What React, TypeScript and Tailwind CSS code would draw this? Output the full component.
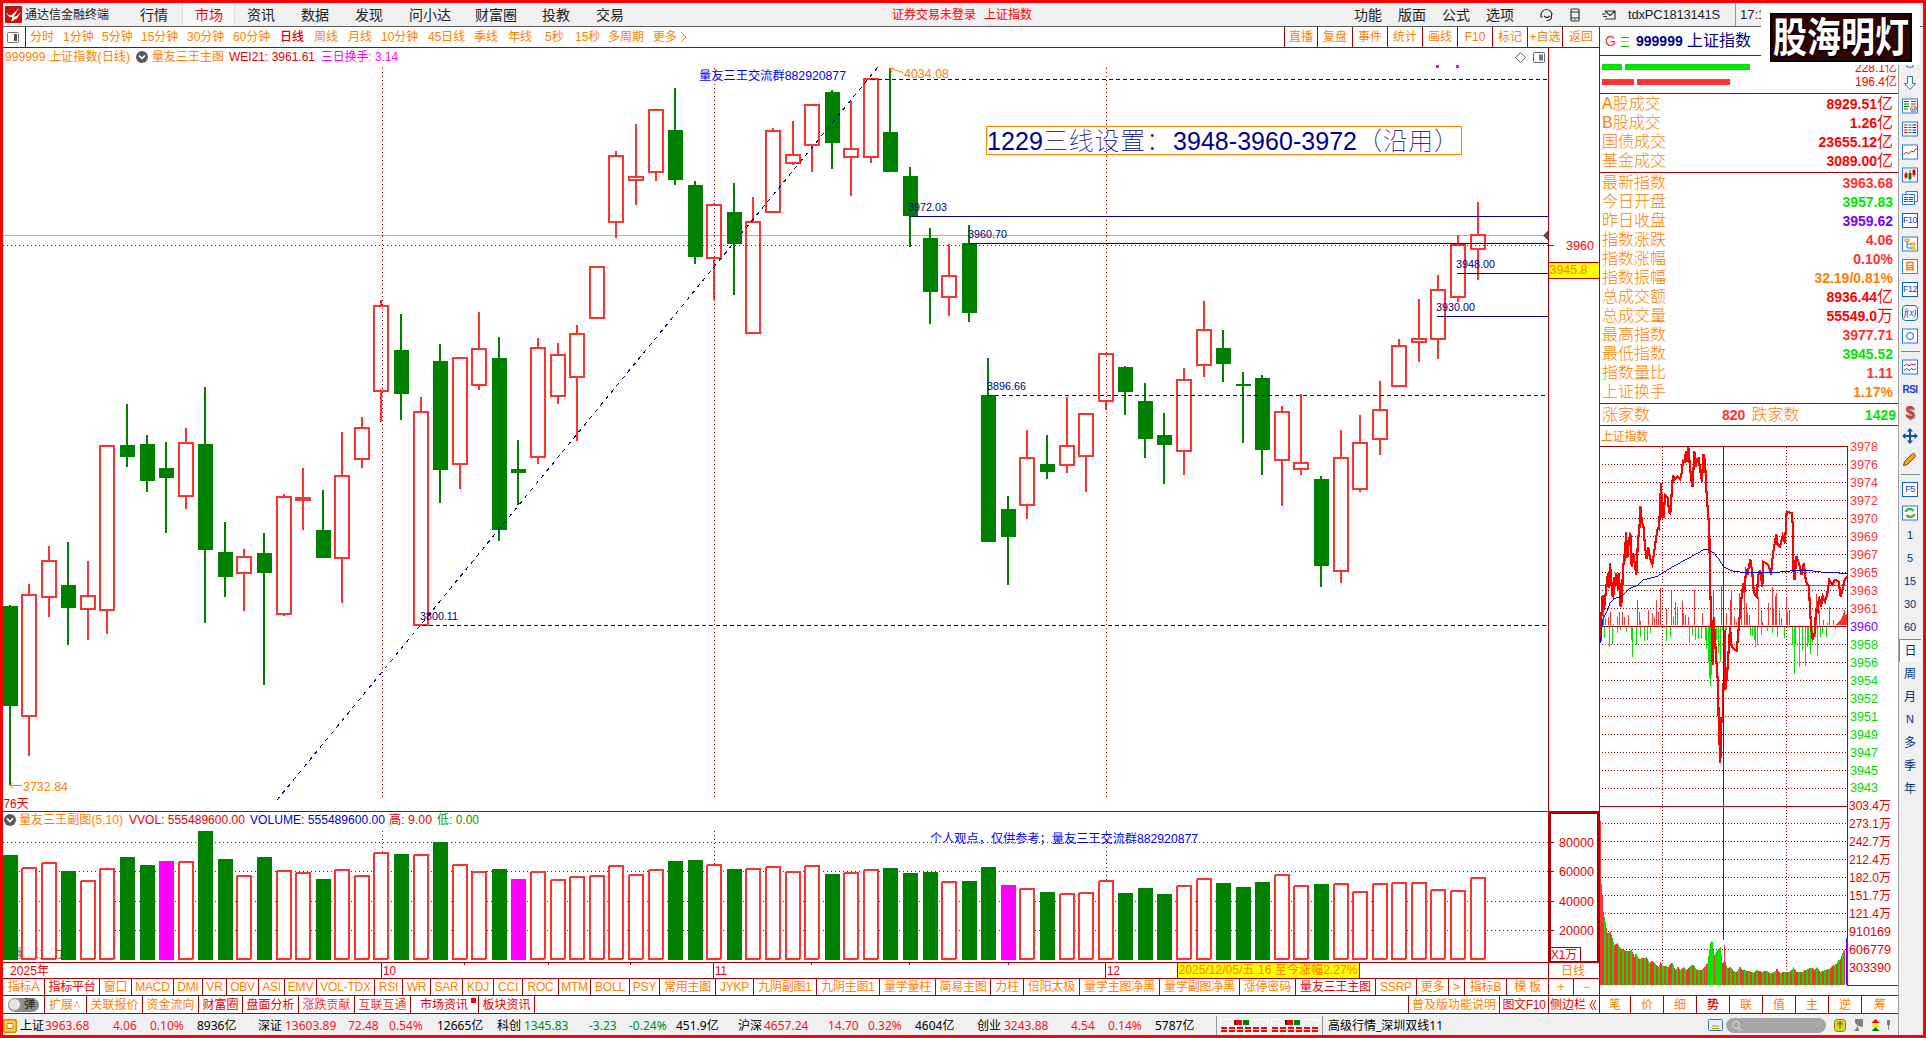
import type { ReactNode } from "react";
import clsx from "clsx";

type Kind = "r" | "g" | "m";
// kind, high, body top, body bottom, low, volume top
type Candle = [Kind, number, number, number, number, number];

const CANDLES: Candle[] = [
  ["g", 605, 606, 706, 785, 855],
  ["r", 584, 594, 717, 756, 867],
  ["r", 546, 560, 598, 617, 862],
  ["g", 542, 585, 608, 645, 871],
  ["r", 561, 595, 610, 640, 880],
  ["r", 445, 445, 611, 634, 868],
  ["g", 404, 445, 457, 467, 857],
  ["g", 435, 444, 481, 492, 865],
  ["g", 442, 468, 478, 533, 861],
  ["r", 428, 442, 497, 509, 861],
  ["g", 387, 444, 550, 623, 831],
  ["g", 522, 552, 577, 597, 859],
  ["r", 549, 556, 574, 611, 875],
  ["g", 533, 553, 573, 685, 857],
  ["r", 494, 496, 615, 616, 870],
  ["r", 468, 497, 501, 530, 872],
  ["g", 490, 530, 558, 558, 879],
  ["r", 432, 475, 559, 603, 869],
  ["r", 417, 427, 460, 468, 875],
  ["r", 300, 305, 392, 422, 852],
  ["g", 314, 350, 394, 420, 854],
  ["r", 397, 411, 626, 626, 854],
  ["g", 344, 361, 470, 503, 842],
  ["r", 357, 357, 465, 489, 864],
  ["r", 312, 348, 386, 390, 871],
  ["g", 337, 358, 530, 541, 869],
  ["g", 440, 469, 473, 505, 879],
  ["r", 338, 347, 458, 464, 871],
  ["r", 343, 354, 397, 404, 879],
  ["r", 325, 333, 378, 441, 876],
  ["r", 266, 266, 319, 319, 875],
  ["r", 151, 155, 223, 238, 865],
  ["r", 124, 176, 181, 205, 874],
  ["r", 109, 109, 173, 181, 869],
  ["g", 88, 130, 180, 185, 861],
  ["g", 181, 185, 257, 264, 860],
  ["r", 203, 204, 259, 300, 864],
  ["g", 183, 212, 244, 295, 869],
  ["r", 197, 221, 334, 334, 868],
  ["r", 128, 130, 213, 213, 866],
  ["r", 121, 154, 164, 165, 871],
  ["r", 104, 104, 146, 172, 865],
  ["g", 90, 92, 143, 169, 874],
  ["r", 101, 148, 158, 196, 872],
  ["r", 78, 78, 158, 163, 869],
  ["g", 68, 132, 172, 172, 868],
  ["g", 167, 176, 216, 247, 873],
  ["g", 228, 238, 292, 324, 872],
  ["r", 244, 275, 298, 316, 881],
  ["g", 225, 243, 313, 322, 881],
  ["g", 358, 395, 542, 542, 867],
  ["g", 496, 509, 537, 585, 885],
  ["r", 430, 457, 506, 519, 888],
  ["g", 435, 464, 472, 479, 892],
  ["r", 397, 445, 466, 473, 893],
  ["r", 413, 413, 457, 492, 892],
  ["r", 353, 353, 402, 410, 880],
  ["g", 366, 367, 392, 415, 893],
  ["g", 383, 401, 439, 458, 888],
  ["g", 413, 435, 445, 484, 894],
  ["r", 368, 379, 452, 475, 885],
  ["r", 301, 329, 366, 377, 878],
  ["g", 330, 348, 364, 382, 883],
  ["g", 372, 384, 386, 443, 887],
  ["g", 375, 378, 450, 475, 882],
  ["r", 406, 411, 461, 506, 874],
  ["r", 394, 462, 470, 475, 885],
  ["g", 476, 479, 566, 587, 884],
  ["r", 430, 457, 572, 583, 883],
  ["r", 415, 442, 490, 492, 891],
  ["r", 381, 409, 440, 455, 883],
  ["r", 339, 345, 387, 387, 882],
  ["r", 299, 338, 343, 362, 882],
  ["r", 275, 289, 340, 359, 889],
  ["r", 235, 244, 298, 302, 890],
  ["r", 202, 234, 250, 280, 877],
];

// days whose volume bar is highlighted
const MAGENTA_DAYS = [8, 26, 51];

const RED = "#ff3232";
const GREEN = "#008000";
const LINE = "#b00000";
const NAVY = "#000090";
const ORANGE = "#ff8000";

const centerOf = (i: number) => Math.floor(10.1 + 19.573 * i);

const MENU = [
  ["行情", "w-[54px]"],
  ["市场", "w-[53px]"],
  ["资讯", "w-[54px]"],
  ["数据", "w-[54px]"],
  ["发现", "w-[54px]"],
  ["问小达", "w-[66px]"],
  ["财富圈", "w-[67px]"],
  ["投教", "w-[54px]"],
  ["交易", "w-[54px]"],
];

const PERIODS = [
  ["分时", "w-[33px]"],
  ["1分钟", "w-[39px]"],
  ["5分钟", "w-[39px]"],
  ["15分钟", "w-[46px]"],
  ["30分钟", "w-[46px]"],
  ["60分钟", "w-[47px]"],
  ["日线", "w-[34px]"],
  ["周线", "w-[34px]"],
  ["月线", "w-[33px]"],
  ["10分钟", "w-[47px]"],
  ["45日线", "w-[46px]"],
  ["季线", "w-[34px]"],
  ["年线", "w-[37px]"],
  ["5秒", "w-[30px]"],
  ["15秒", "w-[33px]"],
  ["多周期", "w-[45px]"],
  ["更多", "w-[27px]"],
];

const TOOLS = [
  ["直播", "w-[33px]"],
  ["复盘", "w-[35px]"],
  ["事件", "w-[35px]"],
  ["统计", "w-[35px]"],
  ["画线", "w-[35px]"],
  ["F10", "w-[35px]"],
  ["标记", "w-[35px]"],
  ["+自选", "w-[35px]"],
  ["返回", "w-[37px]"],
];

const INDICATORS = [
  ["指标A", "w-[42px]"],
  ["指标平台", "w-[55px]"],
  ["窗口", "w-[32px]"],
  ["MACD", "w-[42px]"],
  ["DMI", "w-[29px]"],
  ["VR", "w-[24px]"],
  ["OBV", "w-[32px]"],
  ["ASI", "w-[26px]"],
  ["EMV", "w-[32px]"],
  ["VOL-TDX", "w-[58px]"],
  ["RSI", "w-[28px]"],
  ["WR", "w-[28px]"],
  ["SAR", "w-[32px]"],
  ["KDJ", "w-[31px]"],
  ["CCI", "w-[29px]"],
  ["ROC", "w-[36px]"],
  ["MTM", "w-[32px]"],
  ["BOLL", "w-[39px]"],
  ["PSY", "w-[30px]"],
  ["常用主图", "w-[56px]"],
  ["JYKP", "w-[38px]"],
  ["九阴副图1", "w-[63px]"],
  ["九阴主图1", "w-[63px]"],
  ["量学量柱", "w-[56px]"],
  ["简易主图", "w-[55px]"],
  ["力柱", "w-[33px]"],
  ["倍阳太极", "w-[56px]"],
  ["量学主图净黑", "w-[80px]"],
  ["量学副图净黑", "w-[80px]"],
  ["涨停密码", "w-[56px]"],
  ["量友三王主图", "w-[80px]"],
  ["SSRP", "w-[41px]"],
  ["更多", "w-[32px]"],
  [">", "w-[16px]"],
  ["指标B", "w-[42px]"],
  ["模 板", "w-[42px]"],
  ["+", "w-[25px]"],
  ["−", "w-[25px]"],
];

const INFO_TABS = [
  ["关联报价", "w-[56px]", "text-[#ff8000]"],
  ["资金流向", "w-[56px]", "text-[#ff8000]"],
  ["财富圈", "w-[44px]", "text-[#e60000]"],
  ["盘面分析", "w-[56px]", "text-[#e60000]"],
  ["涨跌贡献", "w-[56px]", "text-[#ff3232]"],
  ["互联互通", "w-[56px]", "text-[#ff3232]"],
];

const TURNOVER = [
  ["A股成交", "8929.51", "亿"],
  ["B股成交", "1.26", "亿"],
  ["国债成交", "23655.12", "亿"],
  ["基金成交", "3089.00", "亿"],
];

const QUOTES = [
  ["最新指数", "3963.68", "", "text-[#ff3232]"],
  ["今日开盘", "3957.83", "", "text-[#00e600]"],
  ["昨日收盘", "3959.62", "", "text-[#8000ff]"],
  ["指数涨跌", "4.06", "", "text-[#ff3232]"],
  ["指数涨幅", "0.10%", "", "text-[#ff3232]"],
  ["指数振幅", "32.19/0.81%", "", "text-[#ff8000]"],
  ["总成交额", "8936.44", "亿", "text-[#ff0000]"],
  ["总成交量", "55549.0", "万", "text-[#ff0000]"],
  ["最高指数", "3977.71", "", "text-[#ff3232]"],
  ["最低指数", "3945.52", "", "text-[#00e600]"],
  ["指数量比", "1.11", "", "text-[#ff3232]"],
  ["上证换手", "1.17%", "", "text-[#ff8000]"],
];

const RED_TEXT = "text-[#ff0f1e]";
const GREEN_TEXT = "text-[#008a10]";
const STATUS = [
  ["上证", "w-[25px]", "text-black"],
  ["3963.68", "w-[68px]", RED_TEXT],
  ["4.06", "w-[37px]", RED_TEXT],
  ["0.10%", "w-[47px]", RED_TEXT],
  ["8936亿", "w-[61px]", "text-black"],
  ["深证", "w-[27px]", "text-black"],
  ["13603.89", "w-[63px]", RED_TEXT],
  ["72.48", "w-[41px]", RED_TEXT],
  ["0.54%", "w-[48px]", RED_TEXT],
  ["12665亿", "w-[60px]", "text-black"],
  ["科创", "w-[27px]", "text-black"],
  ["1345.83", "w-[65px]", GREEN_TEXT],
  ["-3.23", "w-[40px]", GREEN_TEXT],
  ["-0.24%", "w-[47px]", GREEN_TEXT],
  ["451.9亿", "w-[62px]", "text-black"],
  ["沪深", "w-[26px]", "text-black"],
  ["4657.24", "w-[64px]", RED_TEXT],
  ["14.70", "w-[40px]", RED_TEXT],
  ["0.32%", "w-[47px]", RED_TEXT],
  ["4604亿", "w-[62px]", "text-black"],
  ["创业", "w-[27px]", "text-black"],
  ["3243.88", "w-[67px]", RED_TEXT],
  ["4.54", "w-[37px]", RED_TEXT],
  ["0.14%", "w-[47px]", RED_TEXT],
  ["5787亿", "w-[61px]", "text-black"],
];

const DETAIL_TABS = [
  ["笔", "w-[31px]"],
  ["价", "w-[33px]"],
  ["细", "w-[33px]"],
  ["势", "w-[33px]"],
  ["联", "w-[33px]"],
  ["值", "w-[33px]"],
  ["主", "w-[33px]"],
  ["逆", "w-[33px]"],
  ["筹", "w-[36px]"],
];

type LabelProps = {
  x: number;
  y: number;
  w?: number;
  fill?: string;
  size?: number;
  children: ReactNode;
};

// y is the vertical middle of the text
const Label = ({ x, y, w, fill = ORANGE, size = 12, children }: LabelProps) => (
  <text x={x} y={y + size * 0.37} fill={fill} fontSize={size} textLength={w} lengthAdjust="spacingAndGlyphs">
    {children}
  </text>
);

const Chevron = ({ x, y }: { x: number; y: number }) => (
  <g shapeRendering="auto">
    <circle cx={x} cy={y} r="6" fill="#5a5a5a" />
    <path d={`M${x - 3} ${y - 1.5}l3 3 3-3`} fill="none" stroke="#fff" strokeWidth="1.6" />
  </g>
);

const TitleBar = () => (
  <header className="flex h-[24px] shrink-0 items-center border-b border-[#5a5a5a] bg-[#f0f0f0] text-sm leading-none text-[#222]">
    <svg className="ml-[2px] shrink-0" width="17" height="17" viewBox="0 0 17 17">
      <rect width="17" height="17" rx="1" fill="#c4100e" />
      <path d="M1.500 6c1 3 3.500 4 6 2.500L14 2 8.500 11l3-1 4.500-4-4 6.500L6 15.500l1.800-4.500C5 12 2 10 1.500 6z" fill="#fff" />
    </svg>
    <span className="ml-[3px] w-[103px] text-xs">通达信金融终端</span>
    <nav className="flex h-full items-center">
      {MENU.map(([name, width]) => (
        <div
          key={name}
          className={clsx(
            "flex h-full shrink-0 items-center pl-[12px]",
            width,
            name === "市场" && "border-x border-[#ddd] bg-[#f8f8f8] pl-[11px] text-[#ff0000]",
          )}
        >
          {name}
        </div>
      ))}
    </nav>
    <span className="ml-[254px] w-[92px] text-xs text-[#ff0000]">证券交易未登录</span>
    <span className="text-xs text-[#ff0000]">上证指数</span>
    <div className="ml-auto flex h-full items-center">
      {["功能", "版面", "公式", "选项"].map((name) => (
        <span key={name} className="w-[44px]">
          {name}
        </span>
      ))}
    </div>
    <svg className="ml-[9px] mr-[5px] shrink-0" width="80" height="18" viewBox="0 0 80 18" fill="none" stroke="#333" strokeWidth="1.2">
      <path d="M2 9a5.500 5.500 0 0 1 11 0M2 8v3h1.500M12.500 8v3c0 2-2 3.500-5 3.500M5 10c2 2 4 2 6 0" />
      <rect x="32" y="3" width="8" height="12" rx="1" />
      <path d="M32 6h8M32 12h8M35.500 13.500h1" />
      <path d="M66 5h10v8h-8M66 5l5 4.500L76 5M63 8h4M64 10.500h4M66 13h3" />
    </svg>
    <span className="ml-[4px] w-[107px] text-[13px] tracking-[-0.2px]">tdxPC1813141S</span>
    <span className="flex h-full w-[188px] items-center border-l border-[#999] pl-[4px] text-[13px]">17:15</span>
  </header>
);

const PeriodBar = () => (
  <div className="flex h-[21px] shrink-0 items-center border-b border-[#b00000] text-xs leading-none text-[#ff8000]">
    <div className="flex h-full w-[23px] shrink-0 items-center border-r border-[#b00000] pl-[4px]">
      <svg width="12" height="11" viewBox="0 0 12 11">
        <rect x=".5" y=".5" width="11" height="10" rx="1" fill="#fff" stroke="#777" />
        <path d="M7 2h3v7H7z" fill="#555" />
      </svg>
    </div>
    <div className="ml-[4px] flex">
      {PERIODS.map(([name, width]) => (
        <span key={name} className={clsx("shrink-0 whitespace-nowrap", width, name === "日线" && "font-medium text-[#e60000]")}>
          {name}
        </span>
      ))}
      <svg width="7" height="12" viewBox="0 0 7 12" fill="none" stroke="#ff8000">
        <path d="M1 1l5 5-5 5" />
      </svg>
    </div>
    <div className="ml-auto flex h-full">
      {TOOLS.map(([name, width]) => (
        <div key={name} className={clsx("flex h-full items-center justify-center whitespace-nowrap border-l border-[#b00000]", width)}>
          {name}
        </div>
      ))}
    </div>
  </div>
);

const priceLevels: [number, number, number, string][] = [
  [909, 216, 207, "3972.03"],
  [969, 243, 234, "3960.70"],
  [1457, 273, 264, "3948.00"],
  [1437, 316, 307, "3930.00"],
];

const MainChart = () => (
  <svg className="block shrink-0" width="1596" height="763" viewBox="3 48 1596 763" shapeRendering="crispEdges">
    <path d="M3 235.500H1548" stroke="#b0b0b0" />
    {CANDLES.map(([kind, high, top, bottom, low], i) => {
      const c = centerOf(i);
      if (kind === "g") {
        return (
          <g key={i} fill={GREEN}>
            <rect x={c - 1} y={high} width="2" height={low - high} />
            <rect x={c - 7} y={top} width="15" height={bottom - top} />
          </g>
        );
      }
      return (
        <g key={i} fill={RED}>
          <rect x={c - 1} y={high} width="2" height={top - high} />
          <rect x={c - 1} y={bottom} width="2" height={low - bottom} />
          <rect x={c - 7} y={top + 1} width="14" height={bottom - top - 2} fill="none" stroke={RED} strokeWidth="2" />
        </g>
      );
    })}

    <g stroke={LINE} strokeDasharray="1 3">
      <path d="M382.500 68V798M714.500 68V798M1106.500 68V798M3 245.500H1548" />
    </g>
    <path d="M1548 231v9l-5-4.500z" fill="#555" />

    <g stroke={NAVY}>
      <path d="M871 79.500H1547M988 395.500H1548M422 625.500H1547" strokeDasharray="4 3" />
      <path d="M277 800L878 67" strokeDasharray="4 4.500" />
    </g>
    {priceLevels.map(([x, y, labelY, value]) => (
      <g key={value}>
        <path d={`M${x} ${y}.5H1548`} stroke="#000080" />
        <Label x={x - 1} y={labelY} w={39} size={11} fill="#000080">
          {value}
        </Label>
      </g>
    ))}
    <Label x={987} y={386} w={39} size={11} fill="#000080">
      3896.66
    </Label>
    <Label x={420} y={616} w={38} size={11} fill="#000080">
      3800.11
    </Label>

    <g stroke={ORANGE} fill="none" shapeRendering="auto">
      <path d="M890 68.500l13 4M890 68.500l4-.5M890 68.500l2 4" />
      <path d="M10 785.500h12M10 785.500l3-3M10 785.500l3 3" />
    </g>
    <Label x={904} y={74} w={45}>
      4034.08
    </Label>
    <Label x={23} y={787} w={45}>
      3732.84
    </Label>
    <Label x={3.500} y={804} w={25} fill="#e60000">
      76天
    </Label>
    <Label x={699} y={76} w={147} fill="#0000ff">
      量友三王交流群882920877
    </Label>

    <rect x="986.500" y="126.500" width="475" height="28" fill="none" stroke={ORANGE} />
    <g fill={NAVY} fontSize="25">
      <text x="987" y="150" textLength="56">1229</text>
      <text x="1043" y="150" textLength="128" fontWeight="100">三线设置：</text>
      <text x="1173" y="150" textLength="184">3948-3960-3972</text>
      <text x="1357" y="150" textLength="102" fontWeight="100">（沿用）</text>
    </g>

    {/* legend */}
    <Label x={5} y={57} w={125}>
      999999 上证指数(日线)
    </Label>
    <Chevron x={142} y={57} />
    <Label x={152} y={57} w={72}>
      量友三王主图
    </Label>
    <Label x={229} y={57} w={86} fill="#e60000">
      WEI21: 3961.61
    </Label>
    <Label x={321} y={57} w={77} fill="#ff00ff">
      三日换手: 3.14
    </Label>
    <path d="M1436 65h3v3h-3zM1456 65h3v3h-3z" fill="#ff00ff" />
    <g shapeRendering="auto" fill="none" stroke="#666">
      <path d="M1520.500 52.500l5 5-5 5-5-5z" />
      <rect x="1533.500" y="52.500" width="11" height="10" rx="1" />
      <path d="M1539 54.500h4v6h-4z" fill="#777" stroke="none" />
    </g>

    {/* price axis */}
    <path d="M1548.500 48V811M1549 245.500h5" stroke={LINE} />
    <Label x={1566} y={245.500} w={28} fill="#ff0000">
      3960
    </Label>
    <rect x="1549" y="262" width="50" height="17" fill="#ffff00" />
    <path d="M1549 262.500h50M1549 278.500h50" stroke={LINE} />
    <Label x={1549.500} y={270} w={38}>
      3945.8
    </Label>
  </svg>
);

const VolumeChart = () => (
  <svg className="block shrink-0" width="1596" height="167" viewBox="3 811 1596 167" shapeRendering="crispEdges">
    <Label x={15} y={954} w={48} fill="#666">
      量王主力
    </Label>
    <g stroke={LINE}>
      <path d="M3 842.500H1548M3 871.500H1548M3 901.500H1548M3 930.500H1548" strokeDasharray="1 3" />
      <path d="M382.500 831V960M714.500 831V960M1106.500 831V960" strokeDasharray="1 3" />
      <path d="M3 811.500H1599M3 962.500H1599M1548.500 811V978" />
      <path d="M381.500 963V978M713.500 963V978M1105.500 963V978" />
      <path d="M464.500 963v2M548.500 963v2M630.500 963v2M811.500 963v2M909.500 963v2M1008.500 963v2" />
      <path d="M1549 842.500h5M1549 871.500h5M1549 901.500h5M1549 930.500h5M1549 857.500h2M1549 886.500h2M1549 916.500h2" />
    </g>
    {CANDLES.map(([kind, , , , , top], i) => {
      const c = centerOf(i);
      const magenta = MAGENTA_DAYS.includes(i);
      return kind === "g" || magenta ? (
        <rect key={i} x={c - 7} y={top} width="15" height={960 - top} fill={magenta ? "#ff00ff" : GREEN} />
      ) : (
        <rect key={i} x={c - 7} y={top + 1} width="14" height={958 - top} rx="1" fill="#fff" stroke={RED} strokeWidth="2" />
      );
    })}

    <Chevron x={10} y={820} />
    <Label x={19} y={820} w={104}>
      量友三王副图(5,10)
    </Label>
    <Label x={129} y={820} w={116} fill="#e60000">
      VVOL: 555489600.00
    </Label>
    <Label x={250} y={820} w={135} fill="#0000d0">
      VOLUME: 555489600.00
    </Label>
    <Label x={389} y={820} w={43} fill="#e60000">
      高: 9.00
    </Label>
    <Label x={437} y={820} w={42} fill="#00a000">
      低: 0.00
    </Label>
    <Label x={930} y={839} w={268} fill="#0000ff">
      个人观点，仅供参考；量友三王交流群882920877
    </Label>

    <rect x="1550" y="813" width="48" height="149" fill="none" stroke={LINE} strokeWidth="2" />
    {[80000, 60000, 40000, 20000].map((value, i) => (
      <Label key={value} x={1559} y={842.500 + i * 29.300} w={35} fill="#e60000">
        {value}
      </Label>
    ))}
    <path d="M1549 947.500h31v14" fill="none" stroke={LINE} />
    <Label x={1551} y={955} w={26} fill="#ff0000">
      X1万
    </Label>

    <Label x={10} y={971} w={39} fill="#e60000">
      2025年
    </Label>
    <Label x={383} y={971} w={13} fill="#e60000">
      10
    </Label>
    <Label x={715} y={971} w={12} fill="#e60000">
      11
    </Label>
    <Label x={1107} y={971} w={13} fill="#e60000">
      12
    </Label>
    <rect x="1177" y="963" width="183" height="15" fill="#ffff00" />
    <path d="M1177.500 963v15M1359.500 963v15" stroke={LINE} />
    <Label x={1178.500} y={970} w={179}>
      2025/12/05/五 16 至今涨幅2.27%
    </Label>
    <Label x={1561} y={971} w={24}>
      日线
    </Label>
  </svg>
);

const IndicatorTabs = () => (
  <div className="flex h-[17px] shrink-0 border-t border-[#b00000] text-xs leading-none text-[#ff8000]">
    {INDICATORS.map(([name, width]) => (
      <div
        key={name}
        className={clsx(
          "flex shrink-0 items-center justify-center whitespace-nowrap border-r border-[#b00000] tracking-[-0.2px] last:border-r-0",
          width,
          (name === "指标平台" || name === "量友三王主图") && "text-[#e60000]",
        )}
      >
        {name}
      </div>
    ))}
  </div>
);

const InfoTabs = () => (
  <div className="flex h-[18px] shrink-0 border-t border-[#b00000] text-xs leading-none">
    <div className="flex w-[42px] items-center border-r border-[#b00000] pl-[5px]">
      <div className="flex h-[14px] w-[31px] items-center justify-between rounded-full bg-[#8c8c8c] pr-[4px] text-[11px] text-[#222]">
        <span className="size-[13px] rounded-full border border-[#999] bg-[#e4e4e4]" />弹
      </div>
    </div>
    <div className="flex w-[42px] items-center border-r border-[#b00000] pl-[4px] text-[#ff8000]">
      扩展
      <svg width="8" height="9" viewBox="0 0 8 9" fill="none" stroke="#ffb060">
        <path d="M1.500 8L4 1l2.500 7" />
      </svg>
    </div>
    {INFO_TABS.map(([name, width, color]) => (
      <div key={name} className={clsx("flex items-center justify-center whitespace-nowrap border-r border-[#b00000]", width, color)}>
        {name}
      </div>
    ))}
    <div className="flex w-[68px] items-center gap-[3px] border-r border-[#b00000] pl-[9px] text-[#e60000]">
      市场资讯
      <span className="mt-[2px] size-[5px] self-start bg-[#ff0000]" />
    </div>
    <div className="flex w-[56px] items-center justify-center border-r border-[#b00000] text-[#e60000]">板块资讯</div>
    <div className="flex-1" />
    <div className="flex w-[91px] items-center justify-center border-l border-[#b00000] text-[#ff8000]">普及版功能说明</div>
    <div className="flex w-[49px] items-center justify-center border-l border-[#b00000] tracking-tight text-[#e60000]">图文F10</div>
    <div className="flex w-[51px] items-center border-l border-[#b00000] pl-px text-[#e60000]">
      侧边栏
      <svg className="ml-[3px]" width="8" height="10" viewBox="0 0 8 10" fill="none" stroke="#e60000">
        <path d="M4 0L1 5l3 5M7 0L4 5l3 5" />
      </svg>
    </div>
  </div>
);

const PRICE_PATH =
  "31,640 33,590 35,540 38,495 42,540 46,500 50,460 54,430 56,475 60,400 64,450 66,495 70,500 73,440 76,470 79,430 84,480 87,430 90,500 92,530 96,510 98,440 102,380 105,385 108,305 112,385 116,340 121,308 125,410 130,370 134,400 139,435 144,330 148,300 151,228 156,280 160,285 165,350 170,388 175,352 180,385 187,403 192,370 198,325 203,295 207,298 210,230 213,160 217,262 221,262 225,195 233,202 237,245 241,250 245,190 249,135 254,148 262,140 270,148 275,130 279,92 284,95 288,62 292,95 295,50 299,100 304,150 308,172 313,62 317,110 321,88 326,85 331,125 336,155 340,72 345,90 349,180 355,260 358,300 360,470 364,560 368,705 371,560 377,660 381,720 384,760 386,870 388,925 391,1000 394,860 398,880 400,800 402,700 404,600 406,780 411,740 416,660 420,590 425,650 432,657 440,662 444,620 449,560 455,500 460,460 463,490 468,420 473,430 481,387 487,430 492,490 500,500 505,435 510,420 517,470 520,395 530,400 537,410 543,435 549,370 559,312 563,345 570,350 578,318 585,340 590,245 605,250 609,290 611,440 614,450 619,378 627,400 635,435 641,400 648,455 657,470 660,540 664,600 668,628 674,610 678,540 683,545 687,500 693,530 698,498 705,515 712,490 718,450 726,465 735,450 746,455 752,500 757,480 764,450 772,440";

const AVERAGE_PATH =
  "31,640 38,570 50,545 62,515 75,505 97,498 120,475 145,465 160,450 200,440 240,415 300,382 340,360 355,358 372,370 385,385 400,410 430,424 460,427 560,427 620,421 660,422 700,427 772,430";

const STRENGTH_UP = [
  35, 560, 40, 500, 47, 565, 54, 560, 62, 547, 71, 582, 83, 560, 88, 545, 98, 545, 104, 560, 115, 555, 142, 510, 147, 545,
  151, 572, 175, 540, 187, 550, 193, 565, 198, 510, 206, 545, 211, 475, 228, 537, 245, 480, 250, 560, 257, 515, 262, 530,
  276, 512, 280, 550, 287, 555, 294, 560, 313, 480, 336, 550, 370, 480, 395, 468, 408, 550, 421, 510, 424, 480, 432, 560,
  440, 575, 449, 490, 453, 500, 463, 490, 468, 520, 472, 550, 477, 555, 506, 500, 514, 540, 518, 575, 534, 520, 546, 470,
  550, 535, 556, 497, 560, 490, 569, 540, 575, 565, 588, 500, 592, 545, 599, 540, 680, 492, 688, 540, 700, 570, 712, 580,
  719, 530, 730, 570, 740, 581, 743, 578, 746, 576, 749, 573, 752, 569, 755, 564, 758, 558, 761, 550, 764, 540, 767, 556,
  770, 553,
];

const STRENGTH_DOWN = [
  42, 625, 58, 650, 66, 642, 82, 610, 92, 600, 110, 605, 123, 630, 127, 680, 138, 645, 150, 620, 163, 632, 172, 630, 181,
  610, 230, 632, 240, 620, 299, 640, 307, 615, 315, 630, 325, 628, 335, 628, 345, 630, 350, 658, 354, 695, 358, 745, 361,
  767, 364, 735, 368, 640, 380, 630, 384, 670, 390, 695, 398, 600, 406, 640, 410, 600, 482, 615, 487, 618, 492, 630, 497,
  650, 503, 645, 515, 615, 532, 602, 546, 610, 562, 620, 584, 625, 608, 645, 612, 733, 616, 645, 628, 710, 637, 660, 647,
  707, 651, 650, 655, 640, 660, 672, 666, 640, 675, 620, 683, 677, 690, 620, 698, 610, 708, 620, 737, 597,
];

// x, top of the one-minute volume bars
const VOLUME_ENVELOPE = [
  31, 93, 34, 283, 37, 317, 39, 360, 43, 380, 46, 395, 52, 430, 60, 424, 66, 440, 72, 465, 83, 460, 90, 475, 110, 484, 125,
  480, 133, 500, 137, 490, 147, 507, 170, 502, 178, 518, 186, 512, 205, 530, 211, 517, 220, 528, 235, 530, 246, 517, 256,
  540, 263, 530, 272, 540, 280, 530, 290, 540, 300, 530, 309, 522, 320, 540, 335, 540, 345, 528, 352, 520, 357, 485, 360,
  460, 366, 448, 372, 495, 384, 478, 392, 470, 396, 520, 400, 517, 402, 448, 406, 517, 412, 535, 422, 530, 430, 543, 440,
  546, 450, 528, 456, 540, 480, 543, 490, 548, 500, 540, 515, 545, 530, 543, 540, 550, 555, 545, 560, 535, 570, 548, 600,
  545, 610, 532, 620, 547, 635, 547, 645, 540, 665, 533, 675, 540, 681, 530, 690, 546, 705, 540, 720, 535, 730, 525, 740,
  520, 745, 510, 750, 510, 757, 488, 763, 480, 766, 575,
];

const pairs = (flat: number[]) =>
  Array.from({ length: flat.length / 2 }, (_, i) => [flat[i * 2], flat[i * 2 + 1]]);

const ENVELOPE = pairs(VOLUME_ENVELOPE);

const envelopeAt = (x: number) => {
  const next = ENVELOPE.findIndex(([px]) => px >= x);
  if (next <= 0) return ENVELOPE[0][1];
  const [x0, y0] = ENVELOPE[next - 1];
  const [x1, y1] = ENVELOPE[next];
  return y0 + ((y1 - y0) * (x - x0)) / (x1 - x0);
};

const MINUTE_BARS = Array.from({ length: 245 }, (_, i) => {
  const x = 31 + i * 3;
  const green = x > 344 && x < 390 ? i % 8 !== 2 : i > 2 && (Math.floor(i / 2) * 5) % 9 < 4;
  return { px: 1600 + i, top: Math.round(790 + envelopeAt(x) / 3), green };
});

const PRICE_TICKS = [
  "3978", "3976", "3974", "3972", "3970", "3969", "3967", "3965", "3963", "3961",
  "3960", "3958", "3956", "3954", "3952", "3951", "3949", "3947", "3945", "3943",
];

const VOLUME_TICKS = ["303.4万", "273.1万", "242.7万", "212.4万", "182.0万", "151.7万", "121.4万", "910169", "606779", "303390"];

const tickColor = (i: number) => (i < 10 ? RED : i === 10 ? "#8000ff" : "#00d800");

const MinuteChart = () => (
  <svg className="block shrink-0" width="298" height="569" viewBox="1600 426 298 569" shapeRendering="crispEdges">
    <Label x={1601} y={437} w={47}>
      上证指数
    </Label>
    <g stroke={LINE}>
      {Array.from({ length: 28 }, (_, i) => i + 1)
        .filter((i) => i !== 10 && i !== 20)
        .map((i) => (
          <path key={i} d={`M1602 ${446.5 + i * 18 - (i > 20 ? 1 : 0)}H1847`} strokeDasharray="1 2" />
        ))}
      <path d="M1662.500 447V985M1786.500 447V985" strokeDasharray="1 2" />
      <path d="M1600 446.500H1848M1600 626.500H1848M1600 806.500H1848M1847.500 446V985M1847 985.500H1898" />
    </g>
    <path d="M1600 585.500H1848" stroke="#707070" />
    <g transform="translate(1590 430) scale(.33333)">
      {pairs(STRENGTH_UP).map(([x, y]) => (
        <rect key={x} x={x - 1} y={y} width="3" height={586 - y} fill={RED} />
      ))}
      {pairs(STRENGTH_DOWN).map(([x, y]) => (
        <rect key={x} x={x - 1} y="590" width="3" height={y - 590} fill="#00e600" />
      ))}
      <polyline points={PRICE_PATH} fill="none" stroke="#ff0000" strokeWidth="6.500" />
      <polyline points={AVERAGE_PATH} fill="none" stroke="#0000ff" strokeWidth="3" />
    </g>
    {MINUTE_BARS.map(({ px, top, green }) => (
      <rect key={px} x={px} y={top} width="1" height={985 - top} fill={green ? "#00e600" : RED} />
    ))}
    <rect x="1846" y="938" width="2" height="47" fill="#8000ff" />
    <path d="M1723.500 446V940" stroke={LINE} />
    {PRICE_TICKS.map((tick, i) => (
      <Label key={tick} x={1850} y={447 + i * 17.950} w={28} fill={tickColor(i)}>
        {tick}
      </Label>
    ))}
    {VOLUME_TICKS.map((tick, i) => (
      <Label key={tick} x={1849} y={806 + i * 18} w={42} fill="#e60000">
        {tick}
      </Label>
    ))}
  </svg>
);

type QuoteRowProps = { label: string; value: string; unit: string; color: string };

const QuoteRow = ({ label, value, unit, color }: QuoteRowProps) => (
  <div className="flex h-[19px] items-center justify-between pl-[2px] pr-[5px] leading-none">
    <span className="text-base font-light text-[#ff8000]">{label}</span>
    <span className={clsx("flex items-center text-sm font-bold", color)}>
      {value}
      {unit && <span className="text-base font-normal">{unit}</span>}
    </span>
  </div>
);

const QuotePanel = () => (
  <aside className="flex w-[299px] shrink-0 flex-col border-l border-[#b00000] leading-none">
    <div className="flex h-[29px] items-center border-b border-[#b00000] pl-[5px]">
      <span className="w-[16px] text-sm text-[#ff3232]">G</span>
      <svg width="8" height="11" viewBox="0 0 8 11" shapeRendering="crispEdges">
        <path d="M0 1h8" stroke="#ff3232" />
        <path d="M0 5h8" stroke="#aaa" />
        <path d="M0 10h8" stroke="#00c000" />
      </svg>
      <span className="ml-[7px] w-[51px] text-sm font-bold text-[#000080]">999999</span>
      <span className="text-base text-[#000080]">上证指数</span>
    </div>
    <div className="flex h-[38px] flex-col border-b border-[#b00000] pl-[2px] pr-px text-xs text-[#ff0000]">
      <div className="flex h-[19px] items-center gap-[3px] pt-[3px]">
        <span className="h-[6px] w-[20px] bg-[#00e600]" />
        <span className="mr-auto h-[6px] w-[125px] bg-[#00e600]" />
        <span className="pt-[2px]">228.1亿</span>
      </div>
      <div className="flex h-[13px] items-center gap-[3px]">
        <span className="h-[6px] w-[32px] bg-[#ff3232]" />
        <span className="mr-auto h-[6px] w-[93px] bg-[#ff3232]" />
        196.4亿
      </div>
    </div>
    <div className="h-[79px] border-b border-[#b00000]">
      {TURNOVER.map(([label, value, unit]) => (
        <QuoteRow key={label} label={label} value={value} unit={unit} color="text-[#ff0000]" />
      ))}
    </div>
    <div className="h-[231px] border-b border-[#b00000]">
      {QUOTES.map(([label, value, unit, color]) => (
        <QuoteRow key={label} label={label} value={value} unit={unit} color={color} />
      ))}
    </div>
    <div className="flex h-[22px] items-center border-b border-[#b00000] pl-[2px] pr-[2px]">
      <span className="text-base font-light text-[#ff8000]">涨家数</span>
      <span className="ml-[72px] text-sm font-bold text-[#ff3232]">820</span>
      <span className="ml-[6px] text-base font-light text-[#ff8000]">跌家数</span>
      <span className="ml-auto text-sm font-bold text-[#00e600]">1429</span>
    </div>
    <MinuteChart />
    <div className="flex h-[18px] border-t border-[#b00000] text-xs text-[#ff8000]">
      {DETAIL_TABS.map(([name, width]) => (
        <div
          key={name}
          className={clsx(
            "flex shrink-0 items-center justify-center border-r border-[#b00000] last:border-r-0",
            width,
            name === "势" && "font-medium text-[#e60000]",
          )}
        >
          {name}
        </div>
      ))}
    </div>
  </aside>
);

const Blocks = () => (
  <svg width="48" height="16" viewBox="0 0 48 16" shapeRendering="crispEdges">
    <path d="M.5 1.500h47v5H.5z" fill="#f0f0f0" stroke="#fff" />
    <path d="M14 2h2v5h-2z" fill="#800000" />
    <path d="M16 2h6v5h-6z" fill="#ff0000" />
    <path d="M23 2h6v5h-6z" fill={GREEN} />
    <path d="M1 10h46M1 13h46" stroke="#ff0000" strokeWidth="2" strokeDasharray="6 2" />
  </svg>
);

const StatusBar = () => (
  <footer className="flex h-[22px] shrink-0 items-center border-t border-[#b00000] bg-[#f0f0f0] pt-[2px] font-['Noto_Sans','Noto_Sans_CJK_SC',sans-serif] text-xs leading-none">
    <svg className="mr-[3px]" width="14" height="14" viewBox="0 0 14 14">
      <rect x=".7" y=".7" width="12.600" height="12.600" rx="1.500" fill="#ffd24a" stroke="#d48a00" strokeWidth="1.400" />
      <path d="M4 4.500h6v5H4z" fill="#fff" stroke="#c88400" />
    </svg>
    {STATUS.map(([text, width, color], i) => (
      <span key={i} className={clsx("shrink-0 whitespace-nowrap", width, color)}>
        {text}
      </span>
    ))}
    <div className="flex h-full items-center gap-[3px] border-x border-[#999] px-[3px]">
      <Blocks />
      <Blocks />
    </div>
    <span className="ml-[5px]">高级行情_深圳双线11</span>
    <div className="ml-auto flex items-center pr-[6px]">
      <svg width="15" height="13" viewBox="0 0 15 13">
        <rect x=".5" y=".5" width="14" height="11" rx="1" fill="#e8f0ff" stroke="#3c6ec0" />
        <path d="M4 7h7M4 9.500h7" stroke="#a8a000" />
      </svg>
      <div className="ml-[3px] flex h-[15px] w-[100px] items-center rounded-full bg-[#a6a6a6] pl-[6px]">
        <svg width="10" height="10" viewBox="0 0 10 10" fill="none" stroke="#d0d0d0" strokeWidth="1.200">
          <circle cx="4" cy="4" r="3.300" />
          <path d="M6.500 6.500L9.500 9.500" />
        </svg>
      </div>
      <svg className="ml-[8px]" width="58" height="15" viewBox="0 0 58 15">
        <rect x=".5" y="1.500" width="11" height="12" rx="3" fill="#e0d820" stroke="#8a8400" />
        <path d="M6 4v7M3.500 6.500L6 4l2.500 2.500" stroke="#7a7400" fill="none" strokeWidth="1.500" />
        <path d="M21 1h8v8l-5-1-3-3zM24 8l-4 5h5z" fill="#808080" />
        <path d="M41.500 1l4 4h-8z" fill="#ff0000" />
        <path d="M41.500 5l4 4h-8z" fill="#f0e000" />
        <path d="M41.500 9l4 4h-8z" fill={GREEN} />
        <path d="M53 2h3v5h-3zM54 7h1v5h-1z" fill="#808080" />
      </svg>
    </div>
  </footer>
);

const Glyph = ({ children }: { children: ReactNode }) => (
  <svg width="16" height="16" viewBox="0 0 16 16" fill="none">
    {children}
  </svg>
);

const Frame = () => <rect x=".5" y="1" width="15" height="14" fill="#fff" stroke="#2a78e4" />;

const FrameText = ({ text }: { text: string }) => (
  <span className="flex h-[15px] w-[16px] items-center justify-center border border-[#0a64c8] bg-white text-[9px] tracking-tighter text-[#1a3ccc]">
    {text}
  </span>
);

const sideIcons: ReactNode[] = [
  <Glyph>
    <path d="M5 15V8H2l6-6 6 6h-3v7z" fill="#fff" stroke="#2a6cd8" />
  </Glyph>,
  <Glyph>
    <path d="M5.500 1.500h5v7h3L8 14.500 2.500 8.500h3z" fill="#fff" stroke="#2a6cd8" />
  </Glyph>,
  <Glyph>
    <Frame />
    <path d="M2 3.500h5M2 6h5M2 8.500h5M2 11h4" stroke={GREEN} />
    <path d="M9 3.500h5M9 6h5" stroke="#f00" />
    <circle cx="11.500" cy="11" r="3" fill="#ddd" stroke="#888" />
    <path d="M10 11l1.500 1.500L14 9" stroke="#666" />
  </Glyph>,
  <Glyph>
    <Frame />
    <path d="M2 4h3.500M2 6.500h3.500M2 9h3.500M2 11.500h3.500" stroke="#f00" />
    <path d="M6.500 4h3M6.500 6.500h3M6.500 9h3M6.500 11.500h3" stroke={GREEN} />
    <path d="M10.500 4H14M10.500 6.500H14M10.500 9H14M10.500 11.500H14" stroke="#00f" />
  </Glyph>,
  <Glyph>
    <Frame />
    <path d="M1.500 11l3-3 2 2 3-3 2 1 3-4" stroke="#e00000" />
  </Glyph>,
  <Glyph>
    <Frame />
    <path d="M4 5v7M12 2v8" stroke="#e00000" />
    <path d="M2.500 6.500h3v4h-3zM10.500 3h3v5h-3z" fill="#e00000" />
    <path d="M6.500 6h3v6h-3zM7.500 3h1v11h-1z" fill={GREEN} />
  </Glyph>,
  <Glyph>
    <path d="M4 1.500h11.500v10H4z" fill="#fff" stroke="#2a78e4" />
    <path d="M.5 4.500h12v10H.5z" fill="#fff" stroke="#2a78e4" />
    <path d="M2 7.500h4M7 7.500h4M2 9.500h4M7 9.500h4M2 11.500h4M7 11.500h4" stroke="#444" />
  </Glyph>,
  <FrameText text="F10" />,
  <Glyph>
    <Frame />
    <path d="M3 3h4v2.500H3zM9 7h4v2H9zM9 11h4v2H9z" fill="#ffe060" stroke="#e0a000" />
    <path d="M5 6v6h4M5 8h4" stroke="#2a78e4" />
  </Glyph>,
  <span className="flex h-[15px] w-[16px] items-center justify-center border border-[#1e90ff] bg-white text-[10px] font-bold text-[#ff7020]">自</span>,
  <FrameText text="F12" />,
  <span className="flex size-[16px] items-center justify-center rounded border border-[#0a7a80] bg-white font-['Liberation_Serif',serif] text-[10px] italic tracking-tighter text-[#1a3ccc]">
    f(x)
  </span>,
  <Glyph>
    <Frame />
    <circle cx="8" cy="8" r="3.500" stroke="#1060e0" />
  </Glyph>,
  "sep",
  <Glyph>
    <Frame />
    <path d="M2 7l2.500-2L7 7l2.500-2L12 6l2-1.500" stroke="#e00000" />
    <path d="M2 11.500l2.500-2 2.500 2 2.500-2 2.500 1.500 2-1.500" stroke="#2040ff" />
  </Glyph>,
  <span className="text-[10px] font-bold tracking-tighter text-[#1a3ccc]">RSI</span>,
  <span className="text-base font-bold text-[#c83c3c] [text-shadow:1px_1px_1px_#777]">$</span>,
  <Glyph>
    <path d="M8 0l3 3.500H9V7h3.500V5L16 8l-3.500 3V9H9v3.500h2L8 16l-3-3.500h2V9H3.500v2L0 8l3.500-3v2H7V3.500H5z" fill="#0a50b8" />
  </Glyph>,
  <Glyph>
    <path d="M1.500 14.500l1-4 8-8 3 3-8 8z" fill="#f0a020" stroke="#7a4a10" />
    <path d="M10.500 2.500l1.500-1 2.500 2.500-1 1.500z" fill="#f08080" />
  </Glyph>,
  "sep",
  <FrameText text="F5" />,
  <Glyph>
    <Frame />
    <path d="M3.500 7c1-3.500 6-4 8-1M12.500 9c-1 3.500-6 4-8 1" stroke="#4cb43c" strokeWidth="2.400" />
  </Glyph>,
  "1",
  "5",
  "15",
  "30",
  "60",
  "日",
  "周",
  "月",
  "N",
  "多",
  "季",
  "年",
];

const SideBar = () => (
  <nav className="flex w-[25px] shrink-0 flex-col items-center border-l border-[#a0a0a0] bg-[#f0f0f0] pr-[2px] pt-[21px] text-xs leading-none text-[#003080]">
    {sideIcons.map((icon, i) =>
      icon === "sep" ? (
        <div key={i} className="flex h-[8px] w-[19px] shrink-0 items-center">
          <span className="h-px w-full bg-[#888]" />
        </div>
      ) : (
        <div
          key={i}
          className={clsx(
            "flex h-[23px] w-[22px] shrink-0 items-center justify-center",
            typeof icon === "string" && /\d|N/.test(icon) && "text-[11px]",
            icon === "日" && "border-l border-t border-[#888] bg-[#f8f8f8]",
          )}
        >
          {icon}
        </div>
      ),
    )}
  </nav>
);

const App = () => (
  <div className="relative flex h-[1038px] w-[1926px] flex-col overflow-hidden border-[3px] border-[#ff0000] bg-white font-['Liberation_Sans','Noto_Sans_CJK_SC',sans-serif]">
    <TitleBar />
    <div className="flex min-h-0 flex-1">
      <div className="flex w-[1895px] shrink-0 flex-col">
        <div className="flex">
          <main className="flex w-[1596px] shrink-0 flex-col">
            <PeriodBar />
            <MainChart />
            <VolumeChart />
            <IndicatorTabs />
            <InfoTabs />
          </main>
          <QuotePanel />
        </div>
        <StatusBar />
      </div>
      <SideBar />
    </div>
    {/* watermark over the top right corner */}
    <div className="absolute left-[1758px] top-[2px] flex h-[60px] w-[159px] items-end bg-white pb-[3px] pl-[9px]">
      <div className="flex h-[49px] w-[142px] items-center justify-center border-2 border-black bg-[#300400]">
        <span className="scale-y-[1.2] text-[34px] font-bold leading-none text-white [text-shadow:1px_1px_0_#000]">股海明灯</span>
      </div>
    </div>
  </div>
);

export default App;
